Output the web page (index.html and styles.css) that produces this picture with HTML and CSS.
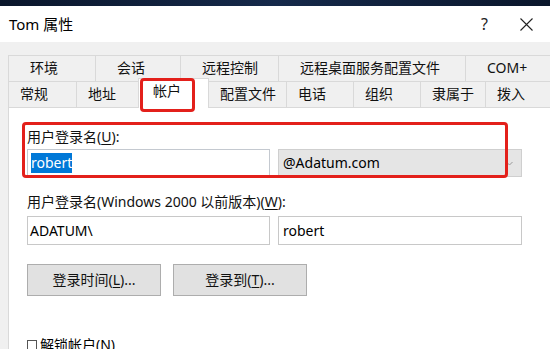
FILE: index.html
```html
<!DOCTYPE html>
<html lang="zh-CN">
<head>
<meta charset="utf-8">
<title>Tom 属性</title>
<link rel="stylesheet" href="styles.css">
</head>
<body>
<div class="topbar"></div>
<div class="titlebar">
  <span class="title">Tom 属性</span>
  <span class="help">?</span>
  <svg class="close" width="13" height="13" viewBox="0 0 13 13"><path d="M0.5 0.5 L12.5 12.5 M12.5 0.5 L0.5 12.5" stroke="#222" stroke-width="1.1" fill="none"/></svg>
</div>
<div class="dialog">
  <div class="tabs">
    <div class="tabrow row1">
      <div class="tab t-env">环境</div>
      <div class="tab t-sess">会话</div>
      <div class="tab t-rc">远程控制</div>
      <div class="tab t-rds">远程桌面服务配置文件</div>
      <div class="tab t-com">COM+</div>
    </div>
    <div class="tabrow row2">
      <div class="tab t-gen">常规</div>
      <div class="tab t-addr">地址</div>
      <div class="tab t-acct active">帐户<span class="mark tabmark"></span></div>
      <div class="tab t-prof">配置文件</div>
      <div class="tab t-tel">电话</div>
      <div class="tab t-org">组织</div>
      <div class="tab t-mem">隶属于</div>
      <div class="tab t-dial">拨入</div>
    </div>
  </div>
  <div class="pane">
    <div class="group">
      <div class="label">用户登录名(<u>U</u>):</div>
      <div class="fields first">
        <div class="input"><span class="sel">robert</span></div>
        <div class="combo"><span>@Adatum.com</span>
          <svg class="arrow" width="7" height="5" viewBox="0 0 7 5"><path d="M0.5 1 L3.5 4 L6.5 1" stroke="#999" stroke-width="1" fill="none"/></svg>
        </div>
      </div>
      <span class="mark groupmark"></span>
    </div>
    <div class="label second">用户登录名(Windows 2000 以前版本)(<u>W</u>):</div>
    <div class="fields">
      <div class="input tall">ADATUM\</div>
      <div class="input tall wide">robert</div>
    </div>
    <div class="buttons">
      <div class="btn">登录时间(<u>L</u>)...</div>
      <div class="btn">登录到(<u>T</u>)...</div>
    </div>
    <div class="check"><span class="box"></span>解锁帐户(<u>N</u>)</div>
  </div>
</div>
</body>
</html>
```

FILE: styles.css
```css
* { box-sizing: border-box; }
html, body {
  margin: 0;
  width: 550px;
  height: 349px;
  overflow: hidden;
}
body {
  font-family: "Noto Sans", "Noto Sans CJK SC", sans-serif;
  background: #f0f0f0;
  color: #000;
}
.topbar {
  height: 6px;
  background: linear-gradient(90deg, #0a162b, #15294a 50%, #0a162b);
}
.titlebar {
  height: 36px;
  background: #fff;
  display: flex;
  align-items: center;
  padding-left: 9px;
  font-size: 15px;
}
.title { line-height: 20px; }
.help {
  margin-left: auto;
  font-size: 16px;
  line-height: 20px;
  color: #222;
}
.close {
  margin-left: 32px;
  margin-right: 17px;
}
.dialog {
  padding-top: 13px;
}
.tabs {
  padding-left: 8px;
}
.tabrow {
  display: flex;
  height: 26px;
  font-size: 14px;
}
.tab {
  flex-shrink: 0;
  height: 26px;
  line-height: 24px;
  border: 1px solid #d9d9d9;
  border-bottom: none;
  margin-right: -1px;
  white-space: nowrap;
  color: #111;
}
.row1 .tab { padding-left: 21px; }
.row2 .tab { padding-left: 11px; }
.t-env { width: 88px; }
.t-sess { width: 86px; }
.t-rc { width: 99px; }
.t-rds { width: 188px; }
.t-com { width: 100px; }
.t-gen { width: 69px; }
.t-addr { width: 63px; }
.t-acct { width: 71px; }
.t-prof { width: 79px; }
.t-tel { width: 68px; }
.t-org { width: 68px; }
.t-mem { width: 66px; }
.t-dial { width: 80px; }
.tab.active {
  height: 30px;
  align-self: flex-end;
  position: relative;
  top: 1px;
  background: #fff;
  padding-left: 14px;
  line-height: 24px;
}
.mark {
  position: absolute;
  border: 3px solid #e3201b;
  border-radius: 4px;
  pointer-events: none;
}
.tabmark {
  left: 1px;
  top: -1px;
  width: 55px;
  height: 34px;
}
.pane {
  margin-left: 8px;
  height: 300px;
  background: #fff;
  border-left: 1px solid #d9d9d9;
  border-top: 1px solid #d9d9d9;
  padding-left: 18px;
  padding-top: 19px;
}
.group {
  position: relative;
}
.groupmark {
  left: -5px;
  top: -5px;
  width: 486px;
  height: 56px;
}
.label {
  font-size: 14px;
  line-height: 20px;
  color: #111;
}
.label.second { margin-top: 15px; }
.fields {
  display: flex;
  gap: 8px;
  margin-top: 2px;
}
.fields:not(.first) { margin-top: 4px; }
.input {
  width: 243px;
  height: 28px;
  border: 1px solid #c4c9d0;
  background: #fff;
  font-size: 14px;
  line-height: 26px;
  padding-left: 2px;
  display: flex;
  align-items: center;
}
.input.tall {
  height: 29px;
  border-color: #c8c8c8;
}
.input.wide {
  width: 244px;
  padding-left: 4px;
}
.sel {
  background: #0078d7;
  color: #fff;
  line-height: 20px;
  display: inline-block;
  margin-left: 1px;
}
.combo {
  width: 244px;
  height: 28px;
  background: #e5e5e5;
  border: 1px solid #cfcfcf;
  font-size: 14px;
  line-height: 26px;
  padding-left: 4px;
  padding-right: 8px;
  display: flex;
  align-items: center;
  justify-content: space-between;
}
.buttons {
  display: flex;
  gap: 12px;
  margin-top: 19px;
}
.btn {
  width: 134px;
  height: 32px;
  background: #e1e1e1;
  border: 1px solid #adadad;
  font-size: 14px;
  line-height: 30px;
  text-align: center;
  color: #111;
}
.check {
  margin-top: 39px;
  font-size: 14px;
  line-height: 20px;
  display: flex;
  align-items: center;
}
.box {
  width: 10px;
  height: 10px;
  border: 1px solid #555;
  margin-right: 3px;
}
u { text-decoration-thickness: 1px; text-underline-offset: 2px; }
```
